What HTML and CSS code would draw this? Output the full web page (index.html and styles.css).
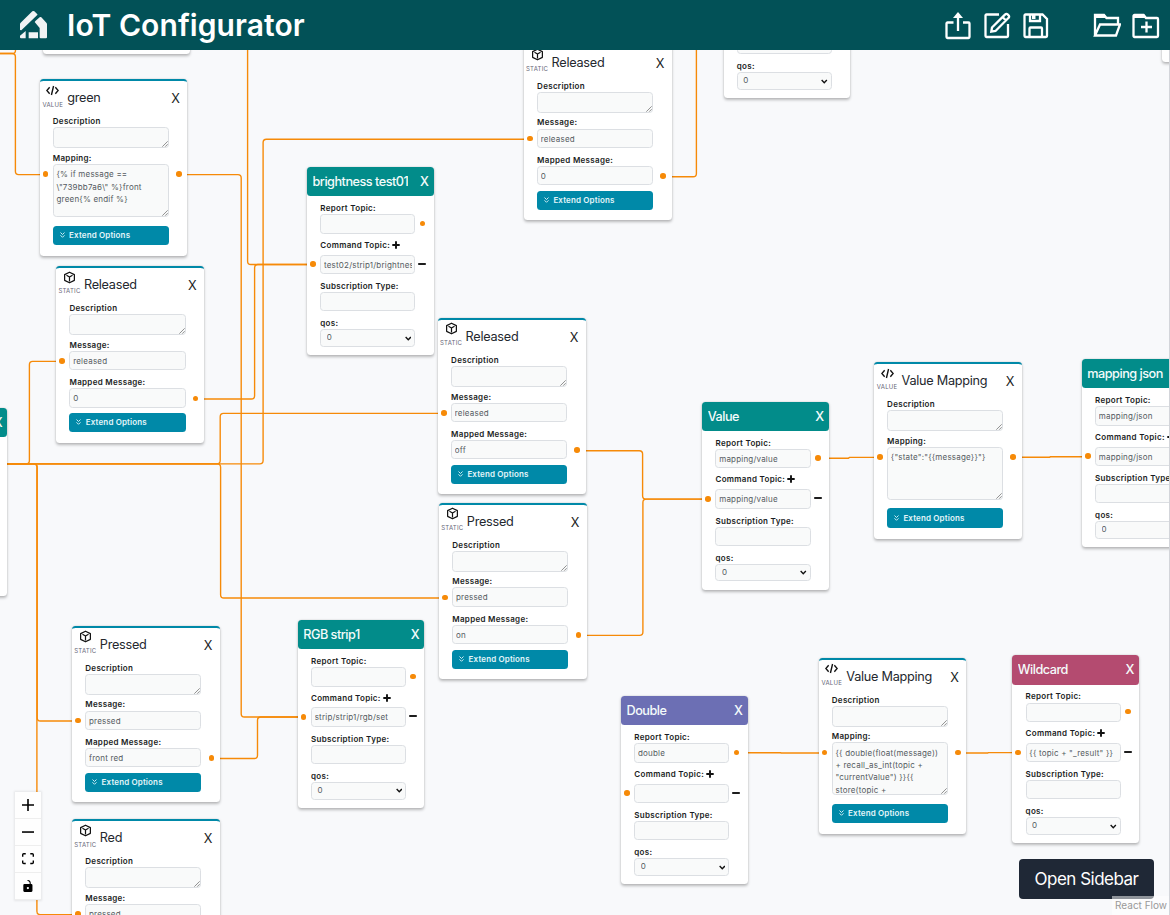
FILE: index.html
```html
<!DOCTYPE html>
<html lang="en">
<head>
<meta charset="utf-8">
<title>IoT Configurator</title>
<link rel="stylesheet" href="styles.css">
</head>
<body>
<header class="topbar">
  <svg class="logo" viewBox="0 0 81 84"><path d="M0 57V39q0-2 2-4L37 1q3-2 6 0l9 9q1 2-1 3L4 58zM0 79V74L17 60v22H3q-3 0-3-3zM26 64h28v18H26zM47 29 60 18q2-1 4 1L79 35q2 2 2 5V79q0 3-3 3H62q-3 0-3-3V51L44 33z"/></svg>
  <h1 class="title">IoT Configurator</h1>
  <nav class="actions">
    <svg class="action" viewBox="0 0 28 28"><path d="M9.500 10.500H3.500a1 1 0 0 0-1 1V25a1 1 0 0 0 1 1h21a1 1 0 0 0 1-1V11.500a1 1 0 0 0-1-1H19"/><path d="M14 19V4"/><path class="solid" d="m14 0 5 6H9z"/></svg>
    <svg class="action" viewBox="0 0 28 28"><path d="M16 2.500H3.500a1 1 0 0 0-1 1V24a1 1 0 0 0 1 1H24a1 1 0 0 0 1-1V12"/><path d="m9 15.500-.7 4.200 4.200-.7L25.600 5.800a1.600 1.600 0 0 0 0-2.400l-1-1a1.600 1.600 0 0 0-2.400 0zM19.500 5l3.500 3.500"/></svg>
    <svg class="action" viewBox="0 0 28 28"><path d="M20.500 2.500h-17a1 1 0 0 0-1 1V24a1 1 0 0 0 1 1H24a1 1 0 0 0 1-1V7zM7.500 25V16.500a1 1 0 0 1 1-1H19a1 1 0 0 1 1 1V25M8 3v6h10V3"/><path class="solid" d="M10 3h3.500v4H10z"/></svg>
    <svg class="action action-gap" viewBox="0 0 28 28"><path d="M2 23.500V3h9l2.500 3H25v6M2 23.500 7 12.500h20l-4 11z"/><path class="solid" d="M1 2h10l3 4H1z"/></svg>
    <svg class="action" viewBox="0 0 28 28"><path d="M2.500 3h9L14 6h11a1 1 0 0 1 1 1v17a1 1 0 0 1-1 1H2.500a1 1 0 0 1-1-1V4a1 1 0 0 1 1-1zM14.500 9.500v11M9 15h11"/><path class="solid" d="M2 2h10l3 4H2z"/></svg>
  </nav>
</header>
<main class="canvas">
  <svg class="edges" viewBox="0 50 1170 865"><g id="edges"></g></svg>
  <div id="nodes"></div>
  <div class="controls">
    <button class="control"><svg viewBox="0 0 32 32"><path d="M32 18.133H18.133V32h-4.266V18.133H0v-4.266h13.867V0h4.266v13.867H32z"/></svg></button>
    <button class="control"><svg viewBox="0 0 32 32"><path d="M0 14h32v4.200H0z"/></svg></button>
    <button class="control"><svg viewBox="0 0 32 30"><path d="M3.690 4.630c0-.53.400-.940.940-.940h5.340V0H4.630A4.600 4.600 0 0 0 0 4.630v5.340h3.690V4.630zM27.370 0h-5.340v3.690h5.340c.53 0 .940.400.940.940v5.340H32V4.630A4.600 4.600 0 0 0 27.370 0zM28.310 25.370c0 .53-.4.940-.94.940h-5.340V30h5.340A4.600 4.600 0 0 0 32 25.370v-5.340h-3.690v5.340zM4.630 26.310a.93.93 0 0 1-.94-.94v-5.340H0v5.340A4.600 4.600 0 0 0 4.630 30h5.340v-3.690H4.630z"/></svg></button>
    <button class="control"><svg viewBox="0 0 25 32"><path d="M21.333 10.667H19.810V7.619C19.810 3.429 16.380 0 12.190 0c-4.114 1.828-1.370 2.133.305 2.438 1.676.305 4.420 2.590 4.420 5.181v3.048H3.047A3.056 3.056 0 0 0 0 13.714v15.238A3.056 3.056 0 0 0 3.048 32h18.285a3.056 3.056 0 0 0 3.048-3.048V13.714a3.056 3.056 0 0 0-3.048-3.047zM12.190 24.533a3.056 3.056 0 0 1-3.047-3.047 3.056 3.056 0 0 1 3.047-3.048 3.056 3.056 0 0 1 3.048 3.048 3.056 3.056 0 0 1-3.048 3.047z"/></svg></button>
  </div>
  <button class="sidebar-button">Open Sidebar</button>
  <div class="attribution">React Flow</div>
</main>
<script src="app.js"></script>
</body>
</html>
```

FILE: styles.css
```css
* { box-sizing: border-box; }
body {
  margin: 0;
  height: 915px;
  overflow: hidden;
  display: flex;
  flex-direction: column;
  font-family: Inter, sans-serif;
  color: #1a1d23;
}
button { font: inherit; border: 0; padding: 0; }
.topbar {
  flex: none;
  height: 50px;
  display: flex;
  align-items: center;
  padding: 0 10.500px 0 20px;
  background: #025157;
}
.logo { width: 27px; height: 28px; fill: #f1f3f4; }
.title {
  margin: 0 0 0 20px;
  font-size: 30px;
  line-height: 50px;
  font-weight: 600;
  color: #fff;
  letter-spacing: .08px;
}
.actions { margin-left: auto; display: flex; gap: 11px; padding-top: 2px; }
.action { width: 28px; height: 28px; fill: none; stroke: #fff; stroke-width: 2.300; }
.action .solid { fill: #fff; stroke: none; }
.action-gap { margin-left: 32px; }

.canvas {
  position: relative;
  flex: 1;
  overflow: hidden;
  background: #f8f9fb;
  border-right: 1px solid #d3d5da;
}
.edges { position: absolute; left: 0; top: 0; width: 1170px; height: 865px; }
.edge { fill: none; stroke: #f68a08; stroke-width: 1.380; }

.node {
  position: absolute;
  background: #fff;
  border-radius: 3.500px;
  box-shadow: 0 1.500px 3px rgba(0,0,0,.26), 0 0 1.500px rgba(0,0,0,.12);
  font-size: 8px;
}
.mapping { width: 147.800px; height: 176.500px; border-top: 2.600px solid #0089a8; }
.topic { width: 126.800px; height: 187.700px; }
.mapping-head { display: flex; height: 34px; padding: 0 7.300px 0 2.800px; }
.kind { width: 21px; display: flex; flex-direction: column; align-items: center; font-size: 6px; line-height: 8px; color: #667; letter-spacing: .25px; }
.kind svg { width: 13px; height: 13px; margin: 2.500px 0 3.800px; flex: none; }
.node-name { font-size: 12.700px; line-height: 33.500px; margin-left: 4px; flex: 1; white-space: nowrap; }
.mapping .node-name { color: #24282e; font-weight: 400; letter-spacing: -.27px; }
.close { font-size: 12.700px; line-height: 35.300px; }
.topic-head {
  display: flex;
  height: 29.200px;
  padding: 0 4.800px 0 5.500px;
  border-radius: 3.500px;
  color: #f4fbfb;
  font-weight: 500;
}
.topic-head .node-name, .topic-head .close { line-height: 29.700px; }
.topic-head .node-name { margin: 0 12px 0 0; overflow: hidden; letter-spacing: -.5px; }
.teal { background: #028c8a; }
.violet { background: #6c6fb4; }
.rose { background: #b44b70; }

.fields { padding-left: 13.300px; display: flex; flex-direction: column; }
.topic .fields { padding-top: 5.800px; }
.mapping .field { width: 116.200px; }
.topic .field { width: 95.200px; }
.label { height: 12.200px; line-height: 12px; font-weight: 600; font-size: 8px; letter-spacing: .3px; white-space: nowrap; display: flex; align-items: center; }
.label svg, .remove { width: 8px; height: 8px; stroke: #111; stroke-width: 1.900; }
.label svg { margin-left: 2px; }
.control-row { position: relative; height: 19.400px; }
.box {
  position: relative;
  width: 100%;
  height: 19.400px;
  border: 1px solid #dcdfe3;
  border-radius: 3.500px;
  background: #f9fafa;
  padding: 0 2.700px;
  line-height: 18px;
  font-size: 8px;
  letter-spacing: .2px;
  color: #555a61;
  overflow: hidden;
  white-space: pre;
}
.value { display: block; overflow: hidden; }
.mapping .field { margin-bottom: 5.700px; }
.mapping .area { margin-bottom: 3.600px; }
.mapping .tall { margin-bottom: 8.600px; }
.area .control-row, .area .box { height: 20.900px; }
.tall .control-row, .tall .box { height: 53px; }
.tall .box { line-height: 12.400px; padding-top: 3.200px; }
.grip { position: absolute; right: 0; bottom: 0; width: 6px; height: 6px; stroke: #777; stroke-width: .8; }
.topic .field { margin-bottom: 5.700px; }
.command .label { height: 15.200px; padding-bottom: 4.500px; }
.topic .select .control-row, .topic .select .box { height: 17.600px; }
.select .box { line-height: 15.600px; padding-left: 5.500px; }
.chevron { position: absolute; right: 3px; top: 5.500px; width: 6.500px; height: 5px; fill: none; stroke: #111; stroke-width: 1.500; }
.remove { position: absolute; right: -10.900px; top: 5px; }
.handle { position: absolute; width: 5.600px; height: 5.600px; border-radius: 50%; background: #f68a08; }
.extend {
  width: 116.200px;
  height: 19.200px;
  border-radius: 3.500px;
  background: #0089a8;
  color: #e4f6fa;
  font-size: 8px;
  font-weight: 600;
  letter-spacing: .14px;
  display: flex;
  align-items: center;
  gap: 4.500px;
  padding: 0 6.800px 1px;
}
.extend svg { width: 5px; height: 6px; fill: none; stroke: #e4f6fa; stroke-width: .9; }

.controls {
  position: absolute;
  left: 15px;
  top: 742px;
  width: 26px;
  box-shadow: 0 0 2px 1px rgba(0,0,0,.08);
}
.control { display: flex; align-items: center; justify-content: center; width: 26px; height: 27px; background: #fefefe; border-bottom: 1px solid #eee; }
.control svg { width: 12px; max-height: 12px; }
.sidebar-button {
  position: absolute;
  left: 1019px;
  top: 809px;
  width: 135px;
  height: 40px;
  border-radius: 4px;
  background: #1f2836;
  color: #fff;
  font-size: 17px;
  letter-spacing: -.5px;
}
.attribution { position: absolute; right: 0; bottom: 0; padding: 2px 2px 3px 3px; background: rgba(255,255,255,.5); font-size: 10px; line-height: 14px; color: #999; }
```

FILE: app.js
```js
const icons = {
  VALUE: '<svg viewBox="0 0 16 16" fill="none" stroke="#111" stroke-width="1.700"><path d="M4.500 4 1 8l3.500 4M11.500 4 15 8l-3.500 4M9.300 2.500 6.700 13.500"/></svg>',
  STATIC: '<svg viewBox="0 0 16 16" fill="none" stroke="#111" stroke-width="1.500" stroke-linejoin="round"><path d="M8 1.500 14 4.500v7L8 14.500 2 11.500v-7zM4.300 5.300 8 7.500l3.700-2.200M8 7.500v5.300"/></svg>'
};
const plus = '<svg viewBox="0 0 8 8"><path d="M4 .3v7.400M.3 4h7.400"/></svg>';
const minus = '<svg class="remove" viewBox="0 0 8 8"><path d="M.2 4h7.600"/></svg>';
const grip = '<svg class="grip" viewBox="0 0 6 6"><path d="M.3 5.700 5.700.3M3.200 5.700 5.700 3.200"/></svg>';
const chevron = '<svg class="chevron" viewBox="0 0 7 5"><path d="m.7 1 2.800 2.800L6.300 1"/></svg>';

const field = (label, text, kind = '', extra = '', after = '', labelIcon = '') =>
  `<div class="field ${kind}"><div class="label">${label}${labelIcon}</div><div class="control-row"><div class="box"><span class="value">${text}</span>${extra}</div>${after}</div></div>`;
const handle = (x, y) => `<i class="handle" style="left:${x - 2.8}px;top:${y - 2.8}px"></i>`;

function mappingNode(x, y, kind, name, a, b) {
  const body = kind === 'VALUE'
    ? field('Mapping:', a, 'tall', grip)
    : field('Message:', a) + field('Mapped Message:', b);
  const outY = kind === 'VALUE' ? 93 : 130.4;
  return `<section class="node mapping" style="left:${x}px;top:${y - 50}px">
    <div class="mapping-head"><div class="kind">${icons[kind]}${kind}</div><div class="node-name">${name}</div><div class="close">X</div></div>
    <div class="fields">${field('Description', '', 'area', grip)}${body}
    <div class="extend"><svg viewBox="0 0 5 6"><path d="M.5.500 2.500 2.500 4.500.500M.5 3.300l2 2 2-2"/></svg>Extend Options</div></div>
    ${handle(6, 93)}${handle(139.3, outY)}</section>`;
}

function topicNode(x, y, tone, name, report, command) {
  return `<section class="node topic" style="left:${x}px;top:${y - 50}px">
    <div class="topic-head ${tone}"><div class="node-name">${name}</div><div class="close">X</div></div>
    <div class="fields">${field('Report Topic:', report)}${field('Command Topic:', command, 'command', '', minus, plus)}${field('Subscription Type:', '')}${field('qos:', '0', 'select', chevron)}</div>
    ${handle(6, 97)}${handle(115.6, 56.3)}</section>`;
}

document.getElementById('nodes').innerHTML = [
  mappingNode(42.6, -122.5, 'STATIC', '', '', ''),
  mappingNode(39.5, 79.3, 'VALUE', 'green', '{% if message ==\n\\"739bb7a6\\" %}front\ngreen{% endif %}'),
  mappingNode(56.2, 266, 'STATIC', 'Released', 'released', '0'),
  mappingNode(523.8, 43.7, 'STATIC', 'Released', 'released', '0'),
  topicNode(307, 167.3, 'teal', 'brightness test01', '', 'test02/strip1/brightness'),
  mappingNode(437.8, 317.8, 'STATIC', 'Released', 'released', 'off'),
  mappingNode(439, 502.6, 'STATIC', 'Pressed', 'pressed', 'on'),
  mappingNode(72, 625.7, 'STATIC', 'Pressed', 'pressed', 'front red'),
  mappingNode(72, 819.3, 'STATIC', 'Red', 'pressed', ''),
  topicNode(297.7, 620, 'teal', 'RGB strip1', '', 'strip/strip1/rgb/set'),
  topicNode(702.2, 401.9, 'teal', 'Value', 'mapping/value', 'mapping/value'),
  mappingNode(873.8, 362, 'VALUE', 'Value Mapping', '{"state":"{{message}}"}'),
  topicNode(1081.8, 359.3, 'teal', 'mapping json', 'mapping/json', 'mapping/json'),
  topicNode(621, 696.3, 'violet', 'Double', 'double', ''),
  mappingNode(818.5, 657.5, 'VALUE', 'Value Mapping', '{{ double(float(message))\n+ recall_as_int(topic +\n"currentValue") }}{{\nstore(topic +'),
  topicNode(1012.3, 655.4, 'rose', 'Wildcard', '', '{{ topic + "_result" }}'),
  topicNode(723.5, -89.7, 'teal', '', '', ''),
  topicNode(1162, -125.5, 'teal', '', '', ''),
  topicNode(-119.4, 408, 'teal', '', '', '')
].join('');

// Each edge is a list of corner points; inner corners are rounded.
const edges = [
  [[-9, 53.5], [15.5, 53.5], [15.5, 30]],
  [[-9, 53.5], [15.4, 53.5], [15.4, 174.6], [45, 174.6]],
  [[178, 174.6], [241.2, 174.6], [241.2, 717], [304, 717]],
  [[247.6, 40], [247.6, 264.5], [313, 264.5]],
  [[195, 399], [254.6, 399], [254.6, 264.5], [313, 264.5]],
  [[0, 463.9], [263.1, 463.9], [263.1, 139.3], [530, 139.3]],
  [[0, 463.9], [29.4, 463.9], [29.4, 361.4], [62, 361.4]],
  [[0, 463.9], [37.2, 463.9], [37.2, 721], [78, 721]],
  [[0, 463.9], [36.9, 463.9], [36.9, 914.6], [78, 914.6]],
  [[0, 463.9], [220.2, 463.9], [220.2, 413.4], [444, 413.4]],
  [[0, 463.9], [220.6, 463.9], [220.6, 598], [445, 598]],
  [[211, 758.5], [257.5, 758.5], [257.5, 717], [304, 717]],
  [[577, 450.8], [642.6, 450.8], [642.6, 499.1], [708, 499.1]],
  [[578, 635.4], [642.9, 635.4], [642.9, 499.1], [708, 499.1]],
  [[663, 176.7], [696.4, 176.7], [696.4, 30]],
  [[818, 458.2], [849, 458.2], [849, 457.4], [880, 457.4]],
  [[1013, 457.3], [1050, 457.3], [1050, 456.7], [1088, 456.7]],
  [[737, 752.7], [781, 752.7], [781, 753], [824, 753]],
  [[957, 753], [988, 753], [988, 752.6], [1018, 752.6]]
];

function toward(from, to, distance) {
  const length = Math.hypot(to[0] - from[0], to[1] - from[1]);
  const t = distance / length;
  return [from[0] + (to[0] - from[0]) * t, from[1] + (to[1] - from[1]) * t];
}
document.getElementById('edges').innerHTML = edges.map(points => {
  let d = `M${points[0]}`;
  for (let i = 1; i < points.length - 1; i++) {
    const before = Math.hypot(points[i][0] - points[i - 1][0], points[i][1] - points[i - 1][1]);
    const after = Math.hypot(points[i][0] - points[i + 1][0], points[i][1] - points[i + 1][1]);
    const r = Math.min(3.3, before / 2, after / 2);
    d += `L${toward(points[i], points[i - 1], r)}Q${points[i]} ${toward(points[i], points[i + 1], r)}`;
  }
  return `<path class="edge" d="${d}L${points[points.length - 1]}"/>`;
}).join('');
```
